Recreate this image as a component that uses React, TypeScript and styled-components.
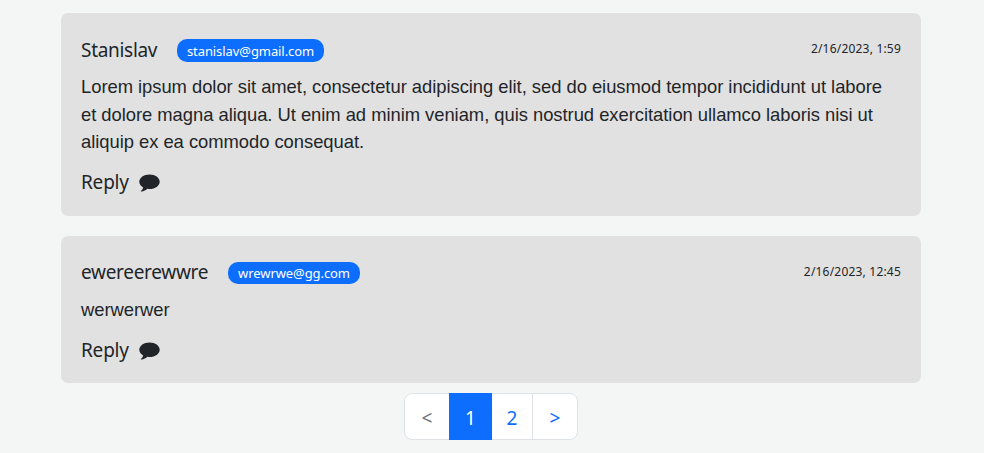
import React from "react";
import styled, { createGlobalStyle } from "styled-components";

const GlobalStyle = createGlobalStyle`
  * { box-sizing: border-box; }
  body {
    margin: 0;
    background: #f4f6f5;
    color: #212529;
    font-family: "Segoe UI", "Noto Sans", sans-serif;
  }
`;

const Page = styled.main`
  width: 860px;
  margin-left: 61px;
  padding-top: 13px;
`;

const Card = styled.article<{ $height: number }>`
  height: ${({ $height }) => $height}px;
  padding: 20px;
  margin-bottom: 20px;
  border-radius: 7px;
  background: #e1e1e1;
  &:last-of-type { margin-bottom: 10px; }
`;

const Header = styled.header`
  display: flex;
  align-items: flex-start;
  height: 40px;
`;

const Name = styled.span<{ $width: number; $lineHeight: number }>`
  width: ${({ $width }) => $width}px;
  margin-right: 20px;
  font-size: 19px;
  letter-spacing: -0.3px;
  line-height: ${({ $lineHeight }) => $lineHeight}px;
  white-space: nowrap;
`;

const Email = styled.span<{ $width: number; $height: number; $lineHeight: number }>`
  width: ${({ $width }) => $width}px;
  height: ${({ $height }) => $height}px;
  margin-top: 6px;
  border-radius: 10px;
  background: #0d6efd;
  color: #fff;
  font-size: 13px;
  letter-spacing: -0.08px;
  line-height: ${({ $lineHeight }) => $lineHeight}px;
  text-align: center;
  white-space: nowrap;
`;

const Time = styled.time`
  margin-left: auto;
  font-size: 12px;
  letter-spacing: 0.2px;
  line-height: 31px;
  white-space: nowrap;
`;

const Message = styled.p`
  margin: 0 0 12px;
  font-family: Arial, "Liberation Sans", sans-serif;
  font-size: 18.4px;
  letter-spacing: -0.035px;
  line-height: 27.6px;
`;

const Reply = styled.button`
  display: flex;
  align-items: center;
  gap: 10px;
  height: 28px;
  padding: 0;
  border: 0;
  background: none;
  color: inherit;
  font: inherit;
  font-size: 19px;
  letter-spacing: -0.2px;
`;

const ReplyLabel = styled.span`
  width: 48px;
  text-align: left;
  white-space: nowrap;
`;

const BubbleIcon = styled.svg`
  display: block;
  width: 21px;
  height: 18px;
  margin-top: 2px;
  fill: currentColor;
`;

const Pagination = styled.nav`
  display: flex;
  width: 174px;
  height: 47px;
  margin-left: 343px;
  border: 1px solid #dee2e6;
  border-radius: 8px;
  background: #fff;
`;

const PageButton = styled.button<{ $width: number; $active?: boolean; $divided?: boolean }>`
  width: ${({ $width }) => $width}px;
  height: ${({ $active }) => ($active ? 47 : 45)}px;
  margin: ${({ $active }) => ($active ? "-1px 0" : "0")};
  padding: 3px 0 0;
  border: 0;
  border-left: ${({ $divided }) => ($divided ? "1px solid #dee2e6" : "0")};
  background: ${({ $active }) => ($active ? "#0d6efd" : "transparent")};
  color: ${({ $active }) => ($active ? "#fff" : "#0d6efd")};
  font: inherit;
  font-size: 19px;
  line-height: 28px;
  &:disabled { color: #6c757d; }
`;

const comments = [
  {
    name: "Stanislav", nameWidth: 76, nameLine: 34,
    email: "stanislav@gmail.com", emailWidth: 147, emailHeight: 23, emailLine: 25,
    time: "2/16/2023, 1:59", height: 203,
    text: "Lorem ipsum dolor sit amet, consectetur adipiscing elit, sed do eiusmod tempor incididunt ut labore et dolore magna aliqua. Ut enim ad minim veniam, quis nostrud exercitation ullamco laboris nisi ut aliquip ex ea commodo consequat.",
  },
  {
    name: "ewereerewwre", nameWidth: 127, nameLine: 32,
    email: "wrewrwe@gg.com", emailWidth: 132, emailHeight: 22, emailLine: 23,
    time: "2/16/2023, 12:45", height: 147, text: "werwerwer",
  },
];

export default function App() {
  return (
    <>
      <GlobalStyle />
      <Page>
        {comments.map((c) => (
          <Card key={c.email} $height={c.height}>
            <Header>
              <Name $width={c.nameWidth} $lineHeight={c.nameLine}>{c.name}</Name>
              <Email $width={c.emailWidth} $height={c.emailHeight} $lineHeight={c.emailLine}>{c.email}</Email>
              <Time>{c.time}</Time>
            </Header>
            <Message>{c.text}</Message>
            <Reply>
              <ReplyLabel>Reply</ReplyLabel>
              <BubbleIcon viewBox="0 0 21 18" aria-hidden="true">
                <path d="M10.5.4C4.8.4.3 3.6.3 7.7c0 2.4 1.500 4.400 3.800 5.700-.3 1.500-1 2.500-2.100 3.300-.5.4-.2 1 .4.9 2.500-.4 4.500-1.300 6-2.800.7.1 1.400.2 2.100.2 5.700 0 10.200-3.200 10.200-7.300S16.200.4 10.500.4z" />
              </BubbleIcon>
            </Reply>
          </Card>
        ))}
        <Pagination>
          <PageButton $width={44} disabled>&lt;</PageButton>
          <PageButton $width={43} $active>1</PageButton>
          <PageButton $width={40}>2</PageButton>
          <PageButton $width={45} $divided>&gt;</PageButton>
        </Pagination>
      </Page>
    </>
  );
}
